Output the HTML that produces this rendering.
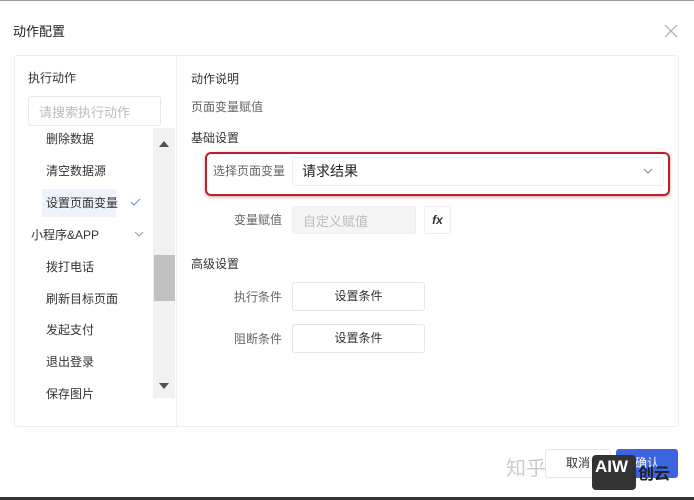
<!DOCTYPE html><html><head><meta charset="utf-8"><style>
*{margin:0;padding:0;box-sizing:border-box}
body{width:694px;height:500px;background:#fff;position:relative;overflow:hidden;font-family:"Liberation Sans","Noto Sans CJK SC",sans-serif;color:#333;font-size:12px}
.a{position:absolute;white-space:nowrap}
.g{color:#666}
.btn{position:absolute;border:1px solid #e6e6e6;border-radius:3px;background:#fff;text-align:center;line-height:27px;font-size:12px;color:#333}
</style></head><body>
<div class="a" style="left:0;top:0;width:694px;height:1px;background:#999"></div>
<div class="a" style="left:13px;top:21px;font-size:13px;color:#222">动作配置</div>
<svg class="a" style="left:664px;top:24px" width="14" height="14"><path d="M1 1L13 13M13 1L1 13" stroke="#aaa" stroke-width="1.2"/></svg>
<div class="a" style="left:14px;top:55px;width:665px;height:372px;border:1px solid #eee;border-radius:3px"></div>
<div class="a" style="left:176px;top:56px;width:1px;height:370px;background:#eee"></div>
<div class="a" style="left:28px;top:69px">执行动作</div>
<div class="a" style="left:28px;top:96px;width:133px;height:30px;border:1px solid #e8e8e8;border-radius:3px;color:#bbb;font-size:13px;padding:5px 10px">请搜索执行动作</div>
<div class="a" style="left:153px;top:128px;width:22px;height:270px;background:#f1f1f1"></div>
<div class="a" style="left:154px;top:255px;width:21px;height:46px;background:#c1c1c1"></div>
<div class="a" style="left:159px;top:141px;width:0;height:0;border-left:5px solid transparent;border-right:5px solid transparent;border-bottom:6px solid #505050"></div>
<div class="a" style="left:159px;top:383px;width:0;height:0;border-left:5px solid transparent;border-right:5px solid transparent;border-top:6px solid #505050"></div>
<div class="a" style="left:42px;top:189px;width:74px;height:28px;background:#eef2fc"></div>
<div class="a" style="left:46px;top:130px">删除数据</div>
<div class="a" style="left:46px;top:162px">清空数据源</div>
<div class="a" style="left:46px;top:194px">设置页面变量</div>
<svg class="a" style="left:130px;top:198px" width="11" height="8"><path d="M1 4L4 7L10 1" stroke="#6b8be8" fill="none" stroke-width="1"/></svg>
<div class="a" style="left:31px;top:226px">小程序&amp;APP</div>
<svg class="a" style="left:134px;top:231px" width="10" height="6"><path d="M1 1L5 5L9 1" stroke="#999" fill="none" stroke-width="1"/></svg>
<div class="a" style="left:46px;top:258px">拨打电话</div>
<div class="a" style="left:46px;top:290px">刷新目标页面</div>
<div class="a" style="left:46px;top:321px">发起支付</div>
<div class="a" style="left:46px;top:353px">退出登录</div>
<div class="a" style="left:46px;top:385px">保存图片</div>
<div class="a" style="left:191px;top:70px">动作说明</div>
<div class="a g" style="left:191px;top:98px">页面变量赋值</div>
<div class="a" style="left:191px;top:129px">基础设置</div>
<div class="a" style="left:205px;top:152px;width:465px;height:44px;border:2px solid #b8202a;border-radius:6px;box-shadow:0 1px 3px rgba(150,0,0,.4)"></div>
<div class="a g" style="left:213px;top:162px">选择页面变量</div>
<div class="a" style="left:292px;top:157px;width:372px;height:29px;border:1px solid #eee;border-radius:3px"></div>
<div class="a" style="left:302px;top:161px;font-size:14px;color:#222">请求结果</div>
<svg class="a" style="left:643px;top:168px" width="10" height="6"><path d="M1 1L5 5L9 1" stroke="#888" fill="none" stroke-width="1"/></svg>
<div class="a g" style="left:234px;top:211px">变量赋值</div>
<div class="a" style="left:292px;top:206px;width:124px;height:28px;background:#f5f5f5;border:1px solid #eee;border-radius:3px;color:#bbb;font-size:13px;padding:4px 10px">自定义赋值</div>
<div class="a" style="left:424px;top:206px;width:27px;height:28px;border:1px solid #eee;border-radius:3px;text-align:center;line-height:26px;font-style:italic;font-weight:bold;font-family:'Liberation Sans',sans-serif;font-size:12px">fx</div>
<div class="a" style="left:191px;top:255px">高级设置</div>
<div class="a g" style="left:234px;top:288px">执行条件</div>
<div class="btn" style="left:292px;top:282px;width:133px;height:29px">设置条件</div>
<div class="a g" style="left:234px;top:330px">阻断条件</div>
<div class="btn" style="left:292px;top:324px;width:133px;height:29px">设置条件</div>
<div class="a" style="left:506px;top:452px;font-size:20px;color:#ccc">知乎 @J</div>
<div class="btn" style="left:545px;top:449px;width:66px;height:29px">取消</div>
<div class="a" style="left:616px;top:449px;width:62px;height:29px;background:#3c63e0;border-radius:3px;color:#fff;text-align:center;line-height:29px">确认</div>
<div class="a" style="left:592px;top:455px;width:44px;height:35px;background:#333;border-radius:4px;color:#fff;font-weight:bold;font-size:17px;padding:2px 3px">AIW</div>
<div class="a" style="left:638px;top:460px;font-size:16px;color:#222;font-weight:bold">创云</div>
<div class="a" style="left:0;top:497px;width:694px;height:3px;background:#333"></div>
</body></html>
